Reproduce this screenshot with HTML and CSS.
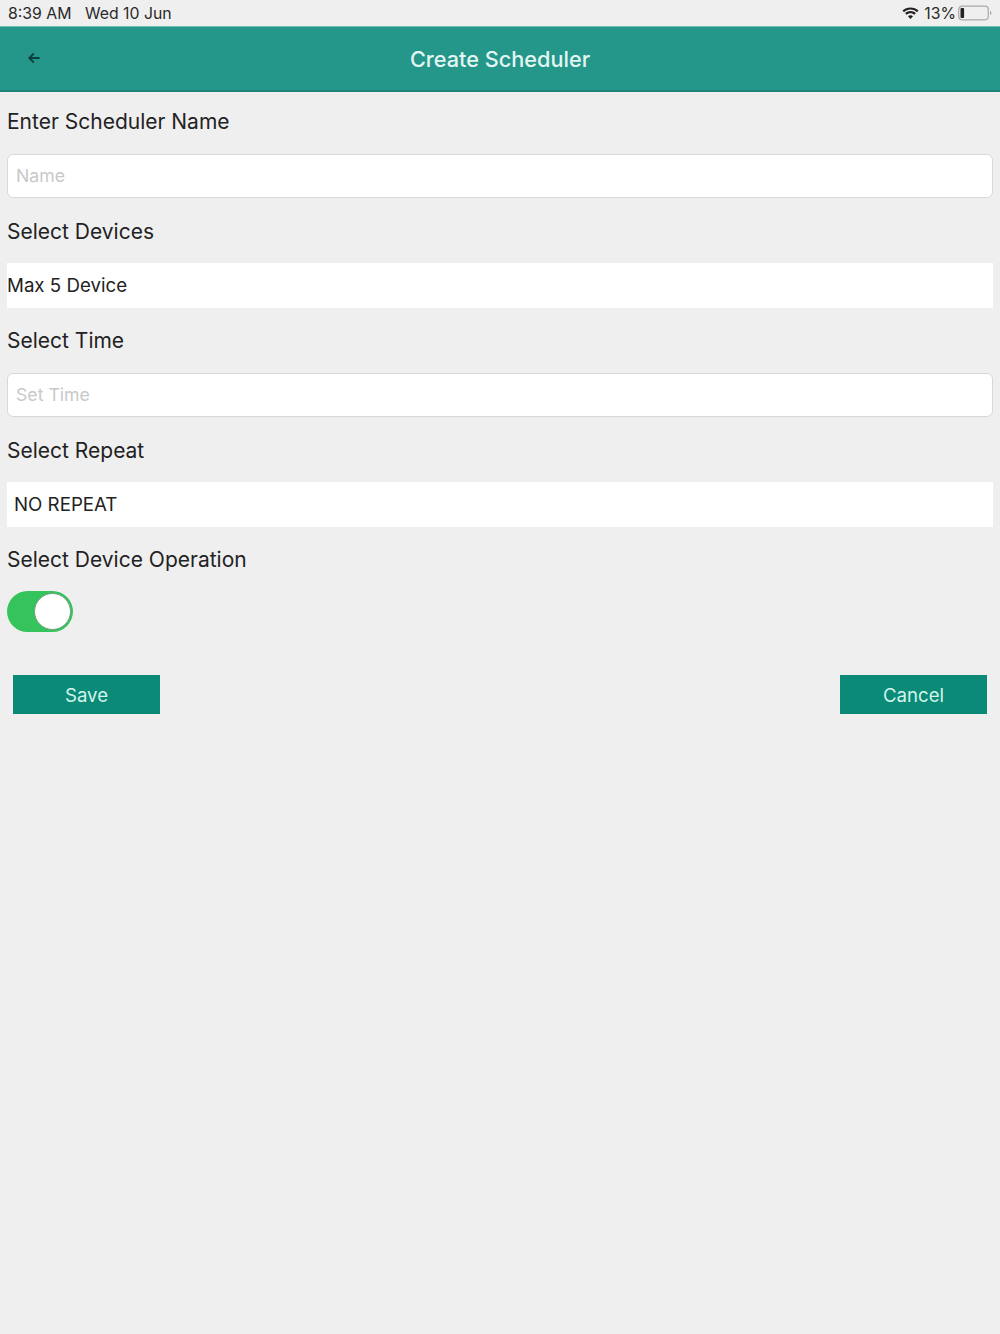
FILE: index.html
```html
<!DOCTYPE html>
<html lang="en">
<head>
<meta charset="utf-8">
<title>Create Scheduler</title>
<link rel="stylesheet" href="styles.css">
</head>
<body>
<div class="status">
  <div class="status-left"><span>8:39 AM</span><span>Wed 10 Jun</span></div>
  <div class="status-right">
    <svg class="wifi" width="19" height="14" viewBox="0 0 19 14"><path d="M9.5 3.6c2.5 0 4.800 1 6.500 2.600l1.500-1.600C15.400 2.600 12.600 1.400 9.500 1.400S3.600 2.600 1.500 4.600L3 6.200C4.700 4.600 7 3.600 9.500 3.600z" fill="#222"/><path d="M9.500 7.200c1.500 0 2.900.6 3.900 1.500l1.500-1.600C13.500 5.800 11.600 5 9.500 5S5.500 5.800 4.100 7.100l1.500 1.600c1-.9 2.400-1.500 3.900-1.500z" fill="#222"/><path d="M9.500 13l2.500-2.700c-.6-.6-1.500-1-2.500-1s-1.900.4-2.500 1z" fill="#222"/></svg>
    <span>13%</span>
    <svg class="battery" width="35" height="16" viewBox="0 0 35 16"><rect x="0.700" y="1.200" width="29.600" height="13.600" rx="3.500" fill="none" stroke="#a9a9aa" stroke-width="1.200"/><rect x="2.500" y="3" width="3.600" height="10" rx="1" fill="#222"/><path d="M32 6v4c.9-.3 1.400-1.100 1.400-2s-.5-1.700-1.400-2z" fill="#a9a9aa"/></svg>
  </div>
</div>
<header class="topbar">
  <svg class="back" width="14" height="12" viewBox="0 0 14 12"><path d="M12.500 6H2.500M6.800 1.500 2.300 6l4.500 4.500" fill="none" stroke="#0a3f3c" stroke-width="1.800"/></svg>
  <h1>Create Scheduler</h1>
</header>
<main class="form">
  <section class="group">
    <div class="label">Enter Scheduler Name</div>
    <div class="input">Name</div>
  </section>
  <section class="group">
    <div class="label">Select Devices</div>
    <div class="select flush">Max 5 Device</div>
  </section>
  <section class="group">
    <div class="label">Select Time</div>
    <div class="input">Set Time</div>
  </section>
  <section class="group">
    <div class="label">Select Repeat</div>
    <div class="select">NO REPEAT</div>
  </section>
  <section class="group">
    <div class="label">Select Device Operation</div>
    <div class="toggle"><span class="knob"></span></div>
  </section>
  <div class="actions">
    <button class="btn" type="button">Save</button>
    <button class="btn" type="button">Cancel</button>
  </div>
</main>
</body>
</html>
```
FILE: styles.css
```css
* { box-sizing: border-box; }
html, body { margin: 0; padding: 0; }
body {
  width: 1000px;
  height: 1334px;
  background: #f0eff0;
  font-family: Inter, "Liberation Sans", Arial, sans-serif;
  color: #222;
  overflow: hidden;
}
.status {
  height: 26px;
  display: flex;
  justify-content: space-between;
  align-items: center;
  padding: 0 7px 0 8px;
  font-size: 15.800px;
  color: #2a2a2a;
}
.status-left { display: flex; gap: 13.500px; }
.status-right { display: flex; align-items: center; gap: 5px; }
.status-right .wifi { margin-right: -1px; }
.status-right .battery { margin-left: -3px; }
.topbar {
  height: 66px;
  background: #25968a;
  border-top: 1px solid #6fc0b6;
  border-bottom: 2px solid #1f8378;
  display: flex;
  align-items: center;
  justify-content: center;
  position: relative;
}
.topbar h1 {
  margin: 0;
  font-size: 21.700px;
  font-weight: 500;
  color: #e3f6f2;
}
.back { position: absolute; left: 27px; top: 25px; }
.form { padding: 13px 7px 0; }
.group { margin-bottom: 17px; }
.label {
  height: 34px;
  line-height: 34px;
  font-size: 21px;
  margin-bottom: 15px;
  white-space: nowrap;
}
.input {
  height: 43.500px;
  background: #fff;
  border: 1.500px solid #d8d8d8;
  border-radius: 6px;
  padding: 0 8px;
  display: flex;
  align-items: center;
  font-size: 17.700px;
  color: #c9c9c9;
}
.select {
  height: 45.500px;
  margin: -1px 0;
  background: #fff;
  display: flex;
  align-items: center;
  padding: 1px 7px 0;
  font-size: 18.700px;
  color: #222;
}
.select.flush { padding-left: 0; }
.toggle {
  width: 66px;
  height: 41px;
  margin-top: -1px;
  border-radius: 21px;
  background: #35c45c;
  position: relative;
}
.knob {
  position: absolute;
  right: 2px;
  top: 2px;
  width: 37px;
  height: 37px;
  border-radius: 50%;
  background: #fff;
  border: 1px solid #6f9f7f;
}
.actions {
  display: flex;
  justify-content: space-between;
  padding: 0 6px;
  margin-top: 43px;
}
.btn {
  width: 147px;
  height: 39px;
  border: 0;
  padding: 0;
  background: #0b8a78;
  color: #d2f5ec;
  font-family: inherit;
  font-size: 18.600px;
}
```
